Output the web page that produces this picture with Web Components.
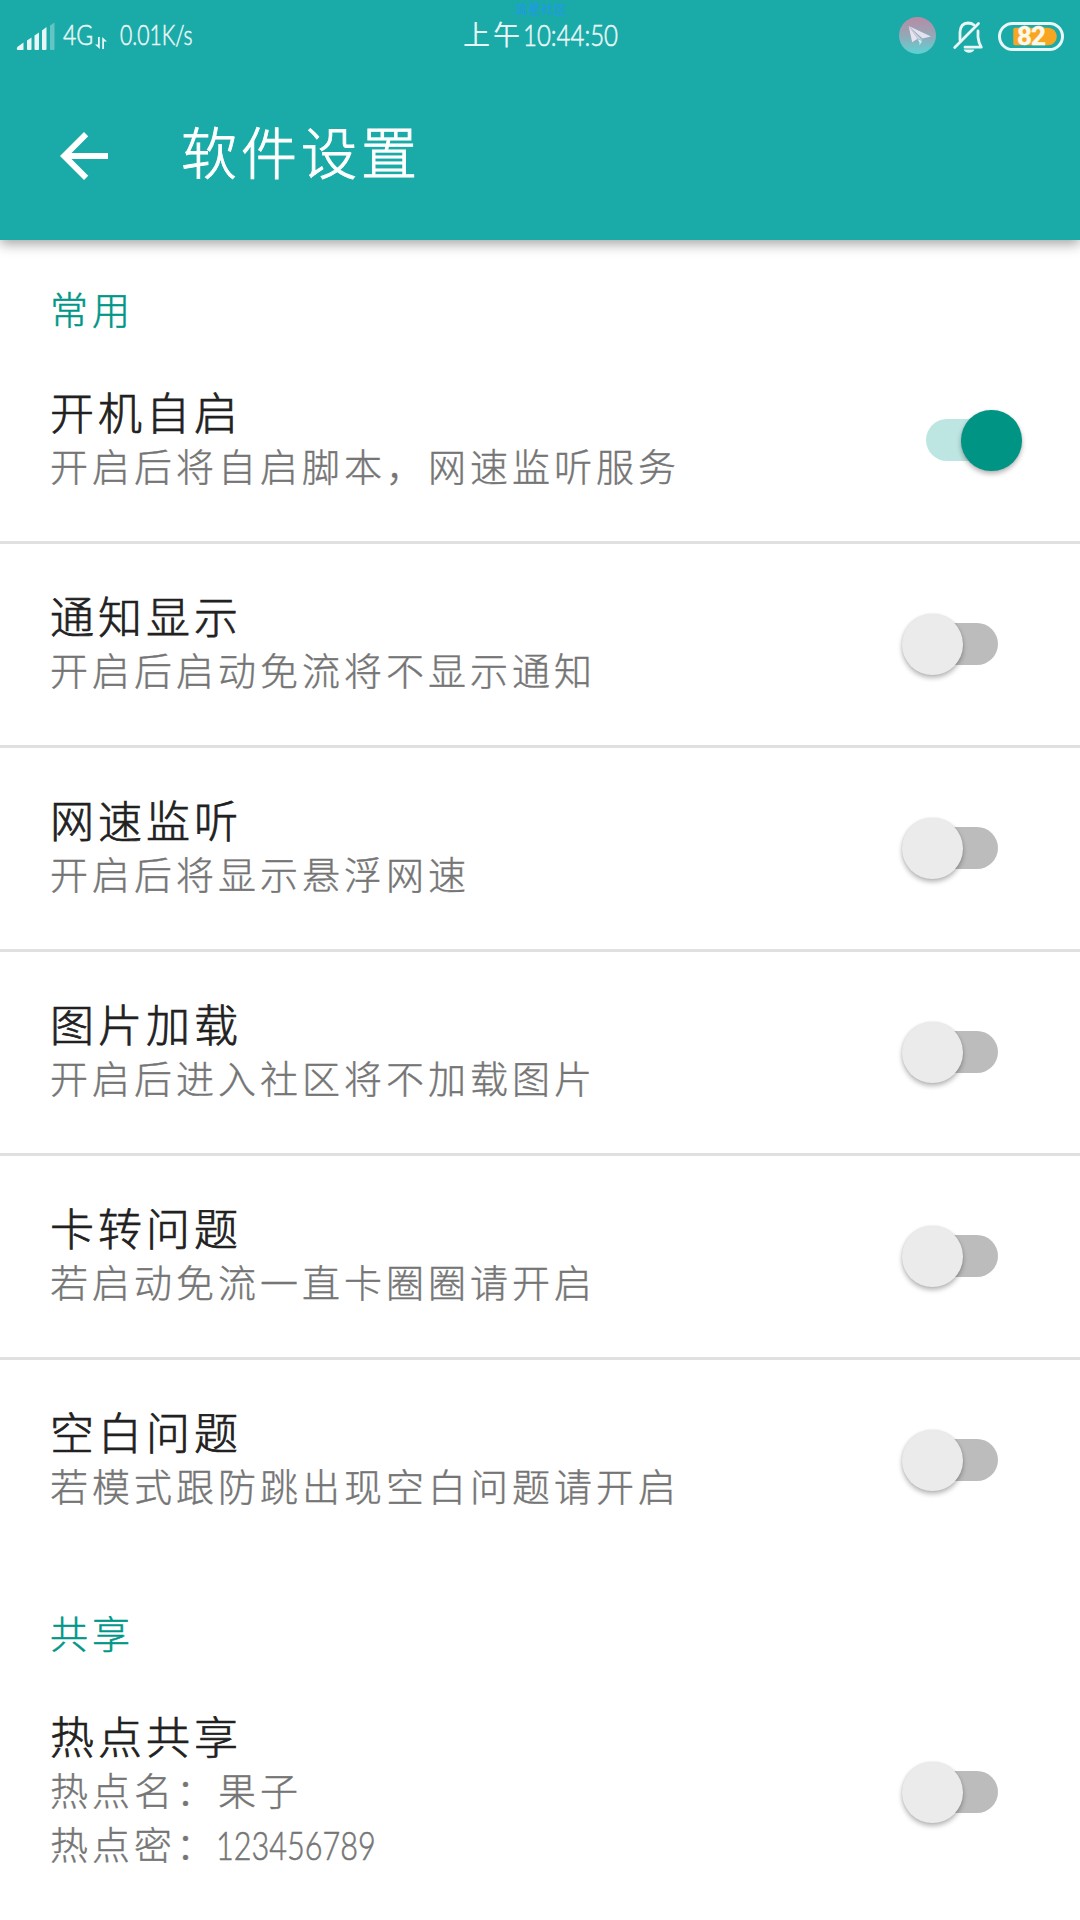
<!DOCTYPE html>
<html lang="zh-CN">
<head>
<meta charset="utf-8">
<title>软件设置</title>
<style>
body{margin:0;background:#fff;width:1080px;height:1920px;overflow:hidden;font-family:"Noto Sans CJK SC",sans-serif;font-weight:300}
</style>
</head>
<body>
<settings-page></settings-page>
<script>
function define(name, html) {
  const t = document.createElement('template');
  t.innerHTML = html;
  customElements.define(name, class extends HTMLElement {
    constructor() {
      super();
      this.attachShadow({mode: 'open'}).appendChild(t.content.cloneNode(true));
    }
  });
}

/* Narrow latin text: drawn inside a box of a fixed width */
customElements.define('narrow-text', class extends HTMLElement {
  constructor() {
    super();
    this.attachShadow({mode: 'open'}).innerHTML = `<style>
      :host{display:inline-block;white-space:nowrap;width:var(--w)}
      span{display:inline-block;font-family:Lato,sans-serif;font-weight:300;-webkit-text-stroke:.6px currentColor;transform:scaleX(var(--sx,.8));transform-origin:0 50%}
    </style><span><slot></slot></span>`;
  }
});

define('signal-icon', `<style>:host{display:block;width:40px;height:30px}svg{display:block}</style>
<svg width="40" height="30" viewBox="0 0 40 30"><g fill="#e8f6f6">
<path d="M1 28.5Q0 27 2 25.500L7.500 21.500V28.500Q7.500 29 7 29H1.500Z"/>
<path d="M11 19.500L15.500 16.500V28Q15.500 29 14.500 29H12Q11 29 11 28Z"/>
<path d="M18.500 14.500L23 11.500V28Q23 29 22 29H19.500Q18.500 29 18.500 28Z"/>
<path d="M26 9.500L30.500 6V28Q30.500 29 29.500 29H27Q26 29 26 28Z"/></g>
<path d="M34 4.500L38.500 1.500V28Q38.500 29 37.500 29H35Q34 29 34 28Z" fill="#62c5c3"/></svg>`);

define('data-icon', `<style>:host{display:block;width:12px;height:12px}svg{display:block}</style>
<svg width="12" height="12" viewBox="0 0 12 12" fill="#e8f6f6"><path d="M3 0H4.800V12L0 7.500H3ZM7.200 12V0L12 4.500H9V12Z"/></svg>`);

define('plane-icon', `<style>:host{display:block;width:37px;height:37px}svg{display:block}</style>
<svg width="37" height="37" viewBox="0 0 37 37"><defs><linearGradient id="g" x1="0" y1="0" x2="0" y2="1"><stop offset="0" stop-color="#b98aa5"/><stop offset=".5" stop-color="#93a8b6"/><stop offset="1" stop-color="#5cd3d5"/></linearGradient></defs>
<circle cx="18.500" cy="18.500" r="18.500" fill="url(#g)"/>
<path d="M9.700 9L32 19.500L23.500 21.500Z" fill="#e3e3ef"/><path d="M9.700 9L13.200 25.200L18.500 21.700Z" fill="#e9e3ee"/><path d="M9.700 9L18.500 21.500L23.500 23.500Z" fill="#c9d3e2"/><path d="M18.500 22L23 24L20.500 28.500V25.500Z" fill="#d4ecf2"/></svg>`);

define('mute-icon', `<style>:host{display:block;width:32px;height:34px}svg{display:block}</style>
<svg width="32" height="34" viewBox="0 0 32 34" fill="none" stroke="#e8f6f6" stroke-width="2.800" stroke-linecap="round" stroke-linejoin="round">
<path d="M8 21V13Q8.500 4.300 16 4Q19.500 4 22 6M26 12V18Q26.500 23.500 29.300 28.200H13"/>
<path d="M2.700 28.600L26.500 4.600"/><path d="M11.500 30.600H22.500Q20.500 33.800 17 33.800Q13.500 33.800 11.500 30.600Z" fill="#e8f6f6" stroke="none"/></svg>`);

define('battery-icon', `<style>:host{display:grid;width:66px;height:29px}svg,span{grid-area:1/1}
span{align-self:center;padding-left:19px;font:700 26px/29px Roboto,sans-serif;color:#fdf8ea;letter-spacing:-1px;-webkit-text-stroke:.4px #fdf8ea}</style>
<svg width="66" height="29" viewBox="0 0 66 29"><path d="M50 5.700A8.800 8.800 0 0 1 50 23.300H17Q15.300 23.300 15.300 21.600V7.400Q15.300 5.700 17 5.700Z" fill="#f8a622"/>
<rect x="1.500" y="1.500" width="63" height="26" rx="13" fill="none" stroke="#e8f6f6" stroke-width="3"/></svg><span>82</span>`);

define('status-bar', `<style>
:host{display:grid;grid-template-columns:1fr auto 1fr;height:71px;padding-bottom:1px;color:#e8f6f6;position:relative;align-items:center}
.l,.c,.r{display:flex;align-items:center}
.l{padding-left:16px;font-size:28px;line-height:34px}
.l narrow-text{margin-bottom:4px}
data-icon{margin:14px 13px 0 2px}
.c{font-size:28px;line-height:34px;width:154px;height:71px}
.c b{font-weight:400;width:62px;letter-spacing:3px;white-space:nowrap;font-size:27px;margin-top:-4px}
.r{justify-content:flex-end;padding-right:16px}
mute-icon{margin:0 14px 0 16px}
battery-icon{margin-top:2px}
.mark{position:absolute;top:0;left:515px;font-size:12px;letter-spacing:1px;line-height:17px;color:#2196f3;font-weight:400;white-space:nowrap}
</style>
<div class="mark">流星社区</div>
<div class="l"><signal-icon></signal-icon><narrow-text style="--w:30px;--sx:.82;margin-left:7px">4G</narrow-text><data-icon></data-icon><narrow-text style="--w:76px;--sx:.755">0.01K/s</narrow-text></div>
<div class="c"><b>上午</b><narrow-text style="--w:94px;--sx:.8;font-size:30px;margin-bottom:5px">10:44:50</narrow-text></div>
<div class="r"><plane-icon></plane-icon><mute-icon></mute-icon><battery-icon></battery-icon></div>`);

define('app-bar', `<style>
:host{display:block;height:240px;background:#1aaaa8;box-shadow:0 4px 12px rgba(0,0,0,.36);position:relative}
.bar{display:flex;align-items:center;height:168px;color:#fff}
svg{display:block;margin:0 73px 0 60px}
h1{margin:0 0 12px;font-size:56px;letter-spacing:4px;line-height:72px;font-weight:300;-webkit-text-stroke:.9px currentColor}
</style><status-bar></status-bar>
<div class="bar"><svg width="48" height="48" viewBox="0 0 48 48" fill="#fff"><path d="M48 21V27H11.500L28.250 43.750L24 48L0 24L24 0L28.250 4.250L11.500 21Z"/></svg><h1><slot></slot></h1></div>`);

define('section-title', `<style>
:host{display:block;height:100px;padding:39px 48px 0 50px;box-sizing:border-box;color:#009688;font-size:38px;letter-spacing:4px;line-height:58px;-webkit-text-stroke:.5px currentColor}
</style><slot></slot>`);

define('toggle-switch', `<style>
:host{display:block;position:relative;width:72px;height:42px;border-radius:21px;background:#bcbcbc}
i{position:absolute;top:-8.800px;left:-23.800px;width:60.500px;height:60.500px;border-radius:50%;background:#ebebeb;box-shadow:0 3px 5px rgba(0,0,0,.28),0 0 2px rgba(0,0,0,.12)}
:host([on]){background:#bde5e1}
:host([on]) i{left:35px;background:#009485}
</style><i></i>`);

customElements.define('setting-row', class extends HTMLElement {
  constructor() {
    super();
    this.attachShadow({mode: 'open'}).innerHTML = `<style>
      :host{display:flex;align-items:center;justify-content:space-between;box-sizing:border-box;padding:44px 82px 49px 50px;border-bottom:3px solid #e0e0e0}
      :host([last]){border-bottom-color:transparent}
      .t{font-size:44px;letter-spacing:4px;line-height:54px;color:#212121;-webkit-text-stroke:.7px currentColor}
      .d{font-size:38px;letter-spacing:4px;line-height:54px;color:#757575;white-space:nowrap;-webkit-text-stroke:.4px currentColor}
      toggle-switch{margin-top:4px}
      ::slotted(div){display:flex}
    </style><div><div class="t"><slot name="title"></slot></div><div class="d"><slot></slot></div></div><toggle-switch></toggle-switch>`;
    this.shadowRoot.querySelector('toggle-switch').toggleAttribute('on', this.hasAttribute('on'));
  }
});

define('settings-page', `<style>:host{display:flex;flex-direction:column;height:1920px;overflow:hidden;background:#fff}
app-bar,section-title,setting-row{flex:none}</style>
<app-bar>软件设置</app-bar>
<section-title>常用</section-title>
<setting-row on><span slot="title">开机自启</span>开启后将自启脚本，网速监听服务</setting-row>
<setting-row><span slot="title">通知显示</span>开启后启动免流将不显示通知</setting-row>
<setting-row><span slot="title">网速监听</span>开启后将显示悬浮网速</setting-row>
<setting-row><span slot="title">图片加载</span>开启后进入社区将不加载图片</setting-row>
<setting-row><span slot="title">卡转问题</span>若启动免流一直卡圈圈请开启</setting-row>
<setting-row last><span slot="title">空白问题</span>若模式跟防跳出现空白问题请开启</setting-row>
<section-title>共享</section-title>
<setting-row last><span slot="title">热点共享</span><div>热点名：果子</div><div>热点密：<narrow-text style="--w:160px;--sx:.785;letter-spacing:0;font-size:39px;margin-left:-2px">123456789</narrow-text></div></setting-row>`);
</script>
</body>
</html>
